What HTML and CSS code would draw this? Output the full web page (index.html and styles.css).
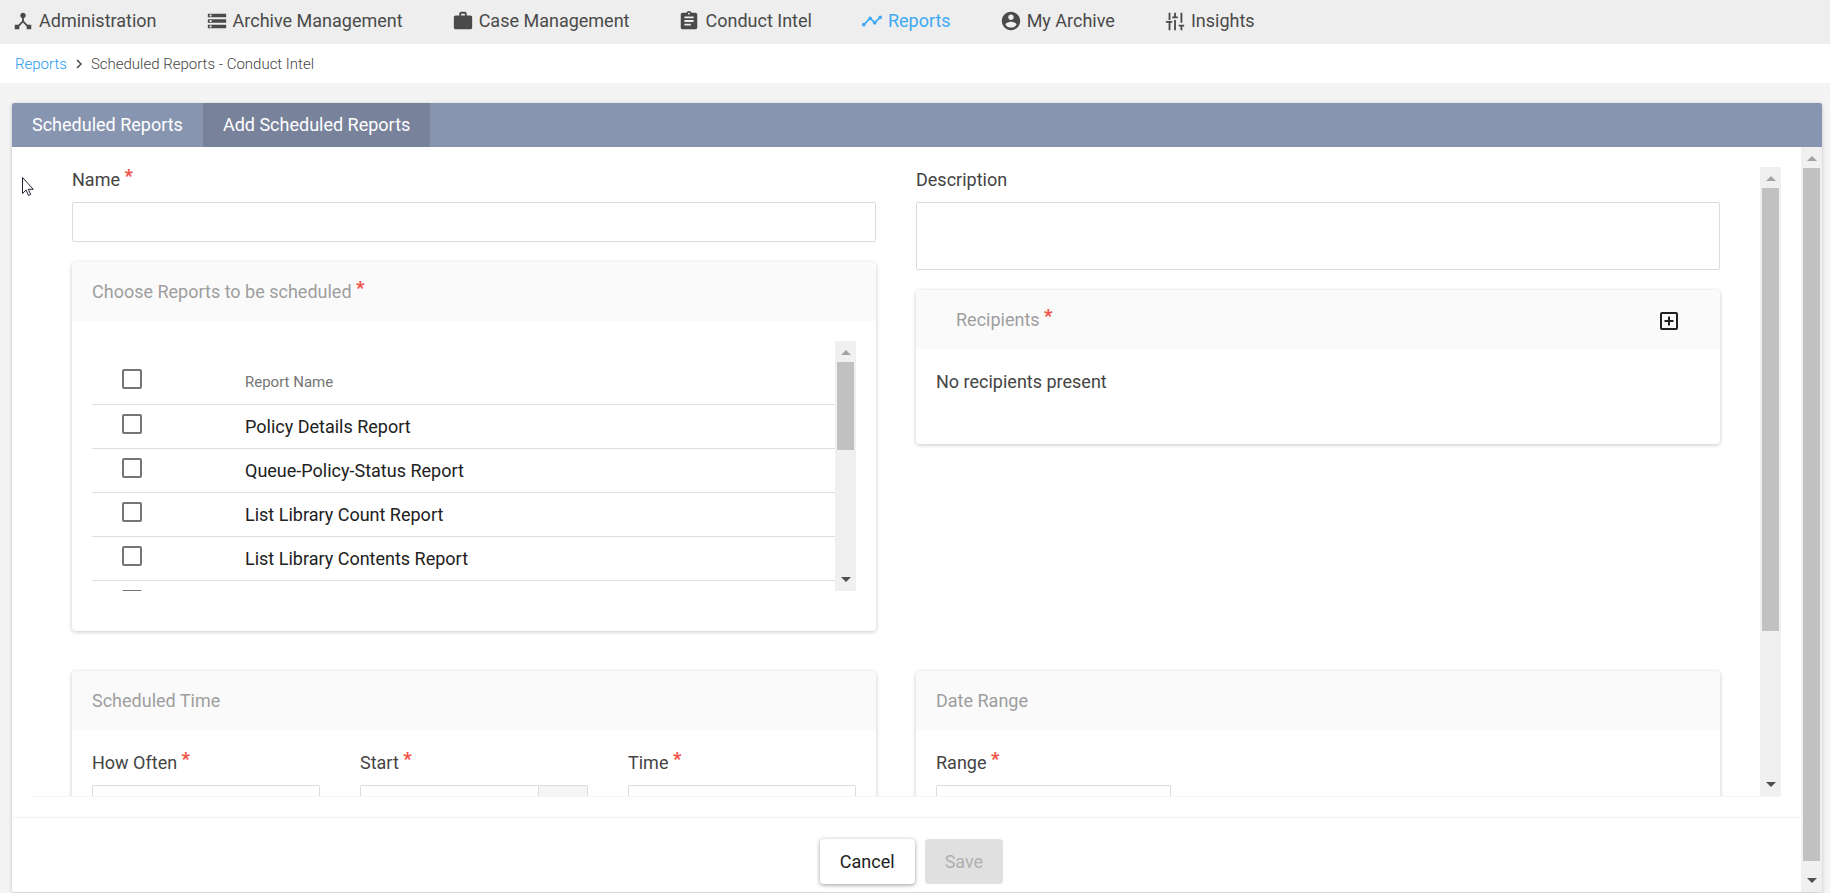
FILE: index.html
```html
<!DOCTYPE html>
<html lang="en">
<head>
<meta charset="utf-8">
<meta name="viewport" content="width=device-width, initial-scale=1">
<title>Scheduled Reports - Conduct Intel</title>
<link rel="stylesheet" href="styles.css">
</head>
<body>
<nav class="main-nav">
  <a class="nav-item" href="#"><svg class="nav-icon" viewBox="0 0 24 24"><path d="M17 16l-4-4V8.82C14.16 8.4 15 7.3 15 6c0-1.66-1.34-3-3-3S9 4.34 9 6c0 1.3.84 2.4 2 2.82V12l-4 4H3v5h5v-3.05l4-4.2 4 4.2V21h5v-5h-4z"/></svg>Administration</a>
  <a class="nav-item" href="#"><svg class="nav-icon" viewBox="0 0 24 24"><path d="M2 20h20v-4H2v4zm2-3h2v2H4v-2zM2 4v4h20V4H2zm4 3H4V5h2v2zm-4 7h20v-4H2v4zm2-3h2v2H4v-2z"/></svg>Archive Management</a>
  <a class="nav-item" href="#"><svg class="nav-icon" viewBox="0 0 24 24"><path d="M20 6h-4V4c0-1.11-.89-2-2-2h-4c-1.11 0-2 .89-2 2v2H4c-1.11 0-1.99.89-1.99 2L2 19c0 1.11.89 2 2 2h16c1.11 0 2-.89 2-2V8c0-1.11-.89-2-2-2zm-6 0h-4V4h4v2z"/></svg>Case Management</a>
  <a class="nav-item" href="#"><svg class="nav-icon" viewBox="0 0 24 24"><path d="M19 3h-4.180C14.400 1.840 13.300 1 12 1c-1.300 0-2.400.84-2.820 2H5c-1.100 0-2 .9-2 2v14c0 1.100.9 2 2 2h14c1.100 0 2-.9 2-2V5c0-1.100-.9-2-2-2zm-7 0c.55 0 1 .45 1 1s-.45 1-1 1-1-.45-1-1 .45-1 1-1zm2 14H7v-2h7v2zm3-4H7v-2h10v2zm0-4H7V7h10v2z"/></svg>Conduct Intel</a>
  <a class="nav-item nav-item-active" href="#"><svg class="nav-icon" viewBox="0 0 24 24"><path d="M23 8c0 1.1-.9 2-2 2-.18 0-.35-.02-.51-.07l-3.56 3.55c.05.16.07.34.07.52 0 1.1-.9 2-2 2s-2-.9-2-2c0-.18.02-.36.07-.52l-2.55-2.55c-.16.05-.34.07-.52.07s-.36-.02-.52-.07l-4.55 4.56c.05.16.07.33.07.51 0 1.1-.9 2-2 2s-2-.9-2-2 .9-2 2-2c.18 0 .35.02.51.07l4.56-4.55C8.02 9.36 8 9.18 8 9c0-1.1.9-2 2-2s2 .9 2 2c0 .18-.02.36-.07.52l2.55 2.55c.16-.05.34-.07.52-.07s.36.02.52.07l3.55-3.56C19.02 8.35 19 8.18 19 8c0-1.1.9-2 2-2s2 .9 2 2z"/></svg>Reports</a>
  <a class="nav-item" href="#"><svg class="nav-icon" viewBox="0 0 24 24"><path d="M12 2C6.48 2 2 6.48 2 12s4.48 10 10 10 10-4.48 10-10S17.52 2 12 2zm0 3c1.66 0 3 1.34 3 3s-1.34 3-3 3-3-1.34-3-3 1.34-3 3-3zm0 14.2c-2.5 0-4.71-1.28-6-3.22.03-1.99 4-3.08 6-3.08 1.99 0 5.97 1.09 6 3.08-1.29 1.94-3.5 3.22-6 3.22z"/></svg>My Archive</a>
  <a class="nav-item" href="#"><svg class="nav-icon" viewBox="0 0 24 24"><path d="M5 3h2v8H5zM2 12h7v2H7v8H5v-8H2zM11 3h2v4h2v2H9V7h2zM11 11h2v11h-2zM18 3h2v11h-2zM16 16h6v2h-2v4h-2v-4h-2z"/></svg>Insights</a>
</nav>

<div class="breadcrumb">
  <a class="breadcrumb-link" href="#">Reports</a>
  <svg class="breadcrumb-arrow" viewBox="0 0 6 10"><path d="M1 1l4 4-4 4"/></svg>
  <span>Scheduled Reports - Conduct Intel</span>
</div>

<main class="panel">
  <div class="tabs">
    <button class="tab" type="button">Scheduled Reports</button>
    <button class="tab tab-active" type="button">Add Scheduled Reports</button>
  </div>
  <div class="panel-body">
    <form class="panel-content">
      <div class="form-wrap">
        <div class="form-frame">
          <div class="form-scroll">
            <div class="form-grid">
              <div class="column">
                <div class="field">
                  <label class="label" for="name">Name <span class="required">*</span></label>
                  <input class="control" id="name" type="text">
                </div>
                <section class="card">
                  <h2 class="card-title">Choose Reports to be scheduled <span class="required">*</span></h2>
                  <div class="reports">
                    <div class="reports-scroll">
                      <table class="reports-table">
                        <thead>
                          <tr><th class="check-cell"><input class="checkbox" type="checkbox" id="r0"></th><th class="name-cell"><label for="r0">Report Name</label></th></tr>
                        </thead>
                        <tbody>
                          <tr><td class="check-cell"><input class="checkbox" type="checkbox" id="r1"></td><td class="name-cell"><label for="r1">Policy Details Report</label></td></tr>
                          <tr><td class="check-cell"><input class="checkbox" type="checkbox" id="r2"></td><td class="name-cell"><label for="r2">Queue-Policy-Status Report</label></td></tr>
                          <tr><td class="check-cell"><input class="checkbox" type="checkbox" id="r3"></td><td class="name-cell"><label for="r3">List Library Count Report</label></td></tr>
                          <tr><td class="check-cell"><input class="checkbox" type="checkbox" id="r4"></td><td class="name-cell"><label for="r4">List Library Contents Report</label></td></tr>
                          <tr><td class="check-cell"><input class="checkbox" type="checkbox" id="r5"></td><td class="name-cell"></td></tr>
                        </tbody>
                      </table>
                    </div>
                    <div class="scrollbar scrollbar-reports"><i class="arrow arrow-up"></i><div class="track"><div class="thumb"></div></div><i class="arrow arrow-down"></i></div>
                  </div>
                </section>
              </div>

              <div class="column">
                <div class="field">
                  <label class="label" for="description">Description</label>
                  <textarea class="control control-area" id="description"></textarea>
                </div>
                <section class="card">
                  <div class="card-title card-title-action">
                    <h2 class="card-heading">Recipients <span class="required">*</span></h2>
                    <button class="add-button" type="button" aria-label="Add"><svg class="add-icon" viewBox="0 0 18 18"><rect x="1" y="1" width="16" height="16" rx="1"/><path d="M9 4.500v9M4.500 9h9"/></svg></button>
                  </div>
                  <p class="empty-note">No recipients present</p>
                </section>
              </div>

              <section class="card">
                <h2 class="card-title">Scheduled Time</h2>
                <div class="schedule">
                  <div class="field">
                    <label class="label" for="often">How Often <span class="required">*</span></label>
                    <select class="control" id="often"></select>
                  </div>
                  <div class="field">
                    <label class="label" for="start">Start <span class="required">*</span></label>
                    <div class="input-group">
                      <input class="control" id="start" type="text">
                      <button class="addon" type="button" aria-label="Start"></button>
                    </div>
                  </div>
                  <div class="field">
                    <label class="label" for="time">Time <span class="required">*</span></label>
                    <input class="control" id="time" type="text">
                  </div>
                </div>
              </section>

              <section class="card">
                <h2 class="card-title">Date Range</h2>
                <div class="schedule schedule-range">
                  <div class="field">
                    <label class="label" for="range">Range <span class="required">*</span></label>
                    <select class="control" id="range"></select>
                  </div>
                </div>
              </section>
            </div>
          </div>
          <div class="scrollbar scrollbar-form"><i class="arrow arrow-up"></i><div class="track"><div class="thumb"></div></div><i class="arrow arrow-down"></i></div>
        </div>
      </div>
      <div class="actions">
        <button class="button" type="button">Cancel</button>
        <button class="button button-disabled" type="submit" disabled>Save</button>
      </div>
    </form>
    <div class="scrollbar scrollbar-panel"><i class="arrow arrow-up"></i><div class="track"><div class="thumb"></div></div><i class="arrow arrow-down"></i></div>
  </div>
</main>

<svg class="pointer" viewBox="0 0 12 19"><path d="M.5.5v16l3.600-3.400 2.400 5.400 2.200-1-2.400-5.200h5z"/></svg>
</body>
</html>
```
FILE: styles.css
```css
* {
  box-sizing: border-box;
}

body {
  margin: 0;
  height: 100vh;
  display: flex;
  flex-direction: column;
  overflow: hidden;
  background: #f4f4f4;
  color: #444;
  font-family: Roboto, "Liberation Sans", sans-serif;
  font-size: 18px;
  line-height: 26px;
}

button,
input,
select,
textarea {
  margin: 0;
  font: inherit;
}

h2,
p {
  margin: 0;
  font-size: 18px;
  font-weight: 400;
}

/* Navigation */
.main-nav {
  flex: none;
  display: flex;
  align-items: center;
  gap: 49px;
  height: 44px;
  padding: 0 12px 2px;
  background: #eee;
}

.nav-item {
  display: flex;
  align-items: center;
  gap: 5px;
  color: #4a4a4a;
  text-decoration: none;
  white-space: nowrap;
}

.nav-item-active {
  color: #3fa9f5;
}

.nav-icon {
  width: 22px;
  height: 22px;
  fill: currentColor;
}

.breadcrumb {
  flex: none;
  display: flex;
  align-items: center;
  height: 39px;
  padding: 0 15px;
  background: #fff;
  font-size: 15px;
  font-weight: 300;
}

.breadcrumb-link {
  color: #1e9bf0;
  text-decoration: none;
}

.breadcrumb-arrow {
  width: 6px;
  height: 10px;
  margin: 0 9px;
  fill: none;
  stroke: #444;
  stroke-width: 1.5;
}

/* Panel */
.panel {
  flex: 1;
  min-height: 0;
  display: flex;
  flex-direction: column;
  margin: 20px 8px 1px 12px;
  border-radius: 2px;
  overflow: hidden;
  background: #fff;
  box-shadow: 0 1px 4px rgba(0, 0, 0, 0.2);
}

.tabs {
  flex: none;
  display: flex;
  height: 44px;
  background: #8895b0;
}

.tab {
  border: 0;
  padding: 0 20px;
  background: transparent;
  color: #fff;
}

.tab-active {
  background: #79829b;
}

.panel-body {
  flex: 1;
  min-height: 0;
  display: flex;
}

.panel-content {
  flex: 1;
  min-width: 0;
  display: flex;
  flex-direction: column;
}

.form-wrap {
  flex: 1;
  min-height: 0;
  display: flex;
  padding: 20px;
}

.form-frame {
  flex: 1;
  min-width: 0;
  display: flex;
  border-bottom: 1px solid #f4f4f4;
}

.form-scroll {
  flex: 1;
  min-width: 0;
  padding: 0 40px;
  overflow: hidden;
}

.form-grid {
  display: grid;
  grid-template-columns: 1fr 1fr;
  align-items: start;
  gap: 40px;
}

.column {
  display: grid;
  gap: 20px;
}

.field {
  display: grid;
  gap: 9px;
}

.required {
  color: #f0544a;
  font-weight: 900;
  line-height: 16px;
  vertical-align: 4px;
}

.control {
  display: block;
  width: 100%;
  height: 40px;
  padding: 0 10px;
  border: 1px solid #dcdcdc;
  border-radius: 2px;
  background: #fff;
  appearance: none;
}

.control-area {
  height: 68px;
  resize: none;
}

.card {
  border-radius: 4px;
  background: #fff;
  box-shadow: 0 1px 4px rgba(0, 0, 0, 0.22);
}

.card-title {
  height: 59px;
  padding: 17px 20px 16px;
  border-radius: 4px 4px 0 0;
  background: #fafafa;
  color: #9e9e9e;
}

.card-title-action {
  display: flex;
  justify-content: space-between;
  align-items: center;
  padding: 0 40px;
}

.card-heading {
  color: #9e9e9e;
}

.add-button {
  display: flex;
  padding: 4px 2px 2px;
  border: 0;
  background: transparent;
}

.add-icon {
  width: 18px;
  height: 18px;
  fill: none;
  stroke: #212121;
  stroke-width: 2;
}

.empty-note {
  padding: 20px 20px 49px;
}

/* Report list */
.reports {
  display: flex;
  height: 310px;
  padding: 20px 20px 40px;
}

.reports-scroll {
  flex: 1;
  overflow: hidden;
}

.reports-table {
  width: 100%;
  border-collapse: separate;
  border-spacing: 0;
  color: #212121;
  text-align: left;
}

.reports-table td {
  height: 44px;
  padding: 0;
  border-bottom: 1px solid #dedede;
}

.reports-table th {
  height: 64px;
  padding: 18px 0 0;
  border-bottom: 1px solid #dedede;
  color: #757575;
  font-size: 15px;
  font-weight: 400;
}

.reports-table .check-cell {
  width: 153px;
  padding-left: 30px;
  padding-bottom: 5px;
}

.checkbox {
  display: block;
  width: 20px;
  height: 20px;
  border: 2px solid #757575;
  border-radius: 2px;
  background: #fff;
  appearance: none;
}

/* Scheduling */
.schedule {
  display: grid;
  grid-template-columns: 1fr 1fr 1fr;
  gap: 40px;
  padding: 20px 20px 40px;
}

.schedule-range {
  gap: 30px;
}

.input-group {
  display: flex;
}

.input-group .control {
  flex: 1;
  min-width: 0;
  border-radius: 2px 0 0 2px;
}

.addon {
  width: 49px;
  border: 1px solid #dcdcdc;
  border-left: 0;
  border-radius: 0 2px 2px 0;
  background: #f5f5f5;
}

/* Actions */
.actions {
  flex: none;
  display: flex;
  justify-content: center;
  gap: 10px;
  padding: 21px 0 8px 10px;
  border-top: 1px solid #f2f2f2;
}

.button {
  height: 45px;
  padding: 0 20px;
  border: 0;
  border-radius: 4px;
  background: #fff;
  color: #212121;
  box-shadow: 0 1px 4px rgba(0, 0, 0, 0.4);
}

.button-disabled {
  background: #e0e0e0;
  color: #b0b0b0;
  box-shadow: none;
}

/* Scrollbars */
.scrollbar {
  flex: none;
  display: flex;
  flex-direction: column;
  align-items: center;
  width: 21px;
  background: #f0f0f0;
}

.arrow {
  flex: none;
  display: flex;
  justify-content: center;
  align-items: center;
  width: 21px;
  height: 21px;
}

.arrow::before {
  content: "";
  border: 5px solid transparent;
}

.arrow-up {
  padding-top: 2px;
}

.arrow-down {
  padding-bottom: 2px;
}

.arrow-up::before {
  border-top: 0;
  border-bottom-color: #a3a3a3;
}

.arrow-down::before {
  border-bottom: 0;
  border-top-color: #505050;
}

.track {
  flex: 1;
  width: 17px;
}

.thumb {
  background: #c1c1c1;
}

.scrollbar-reports .thumb {
  height: 42.5%;
}

.scrollbar-form .thumb {
  height: 75.5%;
}

.scrollbar-panel .thumb {
  height: 98.6%;
}

.pointer {
  position: absolute;
  left: 22px;
  top: 177px;
  width: 12px;
  height: 19px;
  fill: #fff;
  stroke: #223;
}
```
